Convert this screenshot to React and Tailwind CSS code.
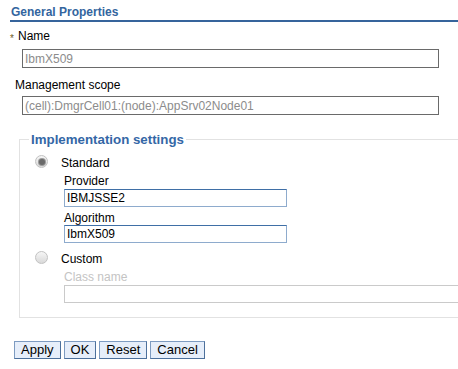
import React from 'react';

const BUTTONS = ['Apply', 'OK', 'Reset', 'Cancel'];

function Radio({ checked }) {
  return (
    <span className="mt-[-1px] flex h-[13px] w-[13px] shrink-0 items-center justify-center rounded-full border border-[#c2c2c2] bg-linear-to-b from-[#f6f6f6] to-[#d9d9d9]">
      {checked && <span className="h-[6px] w-[6px] rounded-full bg-[#6a6a6a] ring-1 ring-[#9a9a9a]" />}
    </span>
  );
}

export default function App() {
  return (
    <div className="h-[369px] w-[458px] overflow-hidden bg-white font-['Liberation_Sans',Arial,sans-serif] text-[12px] leading-[14px] text-black">
      {/* Section title */}
      <div className="ml-[10px] border-b-2 border-[#36649c] pt-[5px] pb-[1px] pl-[1px] font-bold text-[#33659e]">
        General Properties
      </div>

      {/* Name */}
      <div className="mt-[7px] flex items-start pl-[10px]">
        <span className="mt-[5px] w-[8px] text-[10px] leading-[10px] text-[#6e5c1e]">*</span>
        <span>Name</span>
      </div>
      <input
        readOnly
        value="IbmX509"
        className="mt-[5px] ml-[22px] block h-[19px] w-[417px] border border-[#6a6a6a] px-[2px] py-0 text-[12px] leading-[14px] text-[#8c8c8c] outline-none"
      />

      {/* Management scope */}
      <div className="mt-[10px] ml-[15px]">Management scope</div>
      <input
        readOnly
        value="(cell):DmgrCell01:(node):AppSrv02Node01"
        className="mt-[4px] ml-[22px] block h-[19px] w-[417px] border border-[#6a6a6a] px-[2px] py-0 text-[12px] leading-[14px] text-[#8c8c8c] outline-none"
      />

      {/* Implementation settings */}
      <fieldset className="mt-[17px] ml-[19px] w-[450px] border border-[#e2e2e2] px-0 pb-[14px]">
        <legend className="ml-[9px] px-[2px] text-[13.3px] leading-[15px] font-bold text-[#3467a6]">
          Implementation settings
        </legend>

        <div className="mt-[9px] flex items-start pl-[15px]">
          <Radio checked />
          <span className="ml-[13px]">Standard</span>
        </div>
        <div className="ml-[44px]">
          <div className="mt-[4px]">Provider</div>
          <input
            readOnly
            value="IBMJSSE2"
            className="mt-[1px] block h-[18px] w-[223px] border border-[#8eabcd] border-t-[#3f6fa6] px-[2px] py-0 text-[12px] leading-[14px] text-black outline-none"
          />
          <div className="mt-[4px]">Algorithm</div>
          <input
            readOnly
            value="IbmX509"
            className="block h-[18px] w-[223px] border border-[#8eabcd] border-t-[#3f6fa6] px-[2px] py-0 text-[12px] leading-[14px] text-black outline-none"
          />
        </div>

        <div className="mt-[9px] flex items-start pl-[15px]">
          <Radio />
          <span className="ml-[13px]">Custom</span>
        </div>
        <div className="ml-[44px]">
          <div className="mt-[4px] text-[#c4c4c4]">Class name</div>
          <input
            readOnly
            value=""
            className="mt-[1px] block h-[18px] w-[400px] border border-[#cacaca] px-[2px] py-0 text-[12px] leading-[14px] outline-none"
          />
        </div>
      </fieldset>

      {/* Buttons */}
      <div className="mt-[23px] ml-[14px] flex gap-[3px]">
        {BUTTONS.map(label => (
          <button
            key={label}
            className="h-[18px] border border-[#7d9bc1] border-r-[#4c709c] border-b-[#4c709c] bg-[#e6eefa] px-[6px] text-[13px] leading-[16px] text-black"
          >
            {label}
          </button>
        ))}
      </div>
    </div>
  );
}
